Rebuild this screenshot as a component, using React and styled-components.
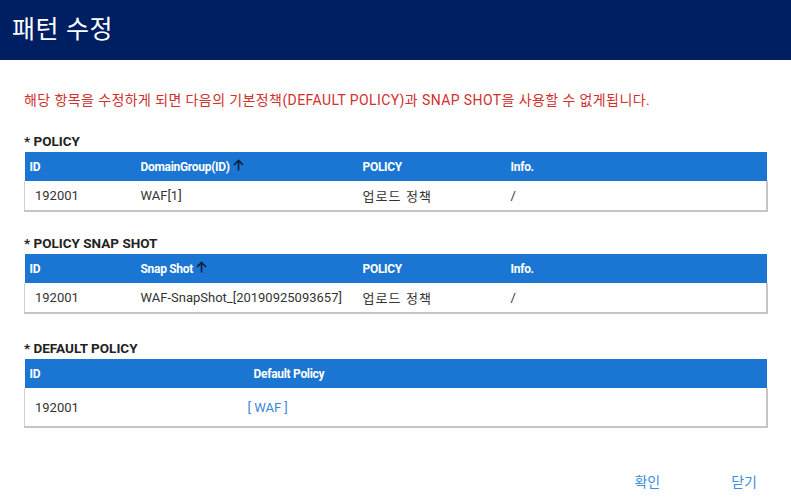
import styled, { createGlobalStyle } from "styled-components";

const GlobalStyle = createGlobalStyle`
  body {
    margin: 0;
    background: #fff;
    font-family: Roboto, "Noto Sans CJK KR", sans-serif;
  }
`;

const Ko = styled.span`
  letter-spacing: 1.1px;
`;

const sections = [
  {
    title: "* POLICY",
    gap: 22,
    cols: [111, 222, 148, null],
    heads: ["ID", "DomainGroup(ID)", "POLICY", "Info."],
    sortCol: 1,
    row: ["192001", "WAF[1]", <Ko>업로드 정책</Ko>, "/"],
  },
  {
    title: "* POLICY SNAP SHOT",
    gap: 25,
    cols: [111, 222, 148, null],
    heads: ["ID", "Snap Shot", "POLICY", "Info."],
    sortCol: 1,
    row: ["192001", "WAF-SnapShot_[20190925093657]", <Ko>업로드 정책</Ko>, "/"],
  },
];

const SortArrow = () => (
  <svg width="11" height="12" viewBox="0 0 11 12" style={{ marginLeft: 3 }}>
    <path d="M5.5 11.5V1.5M1 6l4.5-4.5L10 6" stroke="#0b1e3a" strokeWidth="1.6" fill="none" />
  </svg>
);

const App = () => {
  return (
    <>
      <GlobalStyle />
      <Modal>
        <Header>패턴 수정</Header>
        <Body>
          <Warning>
            해당 항목을 수정하게 되면 다음의 기본정책(DEFAULT POLICY)과 SNAP SHOT을 사용할 수 없게됩니다.
          </Warning>
          {sections.map((s) => (
            <Section key={s.title} $gap={s.gap}>
              <SectionTitle>{s.title}</SectionTitle>
              <Table>
                <colgroup>
                  {s.cols.map((w, i) => (
                    <col key={i} style={w ? { width: w } : undefined} />
                  ))}
                </colgroup>
                <thead>
                  <tr>
                    {s.heads.map((h, i) => (
                      <Th key={h}>
                        {h}
                        {i === s.sortCol && <SortArrow />}
                      </Th>
                    ))}
                  </tr>
                </thead>
                <tbody>
                  <tr>
                    {s.row.map((c, i) => (
                      <Td key={i} $first={i === 0}>
                        {c}
                      </Td>
                    ))}
                  </tr>
                </tbody>
              </Table>
            </Section>
          ))}
          <Section>
            <SectionTitle>* DEFAULT POLICY</SectionTitle>
            <Table>
              <colgroup>
                <col style={{ width: 224 }} />
                <col />
              </colgroup>
              <thead>
                <tr>
                  <Th>ID</Th>
                  <Th>Default Policy</Th>
                </tr>
              </thead>
              <tbody>
                <tr>
                  <Td $first $tall>192001</Td>
                  <Td $tall>
                    <PolicyLink>[ WAF ]</PolicyLink>
                  </Td>
                </tr>
              </tbody>
            </Table>
          </Section>
        </Body>
        <Footer>
          <FooterButton>확인</FooterButton>
          <FooterButton>닫기</FooterButton>
        </Footer>
      </Modal>
    </>
  );
};

const Modal = styled.div`
  width: 791px;
  height: 503px;
  background: #fff;
  display: flex;
  flex-direction: column;
`;

const Header = styled.div`
  height: 60px;
  background: #001e62;
  color: #fff;
  font-size: 25px;
  letter-spacing: 0.6px;
  padding-left: 12px;
  display: flex;
  align-items: center;
  padding-bottom: 6px;
  box-sizing: border-box;
`;

const Body = styled.div`
  padding: 31px 23px 0 24px;
`;

const Warning = styled.p`
  margin: 0 0 23px;
  color: #d0312d;
  font-size: 14px;
  line-height: 18px;
  letter-spacing: 0.4px;
`;

const Section = styled.div`
  margin-bottom: ${(p) => p.$gap || 0}px;
`;

const SectionTitle = styled.div`
  font-size: 13.5px;
  font-weight: 700;
  color: #222;
  line-height: 18px;
  margin-bottom: 2px;
`;

const Table = styled.table`
  width: 744px;
  border-collapse: collapse;
  table-layout: fixed;
  font-size: 12px;
`;

const Th = styled.th`
  background: #1a76d2;
  color: #fff;
  font-weight: 700;
  text-align: left;
  height: 29px;
  padding: 0 5px;
  white-space: nowrap;
  letter-spacing: -0.3px;
`;

const Td = styled.td`
  height: ${(p) => (p.$tall ? "38px" : "29px")};
  padding: 0 ${(p) => (p.$first ? "10px" : "5px")};
  font-size: 13px;
  color: #333;
  border-bottom: 2px solid #c6c6c6;
  border-left: ${(p) => (p.$first ? "1px solid #d0d0d0" : "none")};
  border-right: 2px solid #c6c6c6;
  white-space: nowrap;
  &:not(:last-child) {
    border-right: none;
  }
`;

const PolicyLink = styled.span`
  color: #3a86d8;
  cursor: pointer;
  margin-left: -6px;
`;

const Footer = styled.div`
  margin-top: auto;
  display: flex;
  justify-content: flex-end;
  gap: 71px;
  padding: 0 34px 12px 0;
`;

const FooterButton = styled.span`
  color: #3a8ee0;
  font-size: 14px;
  cursor: pointer;
`;

export default App;
